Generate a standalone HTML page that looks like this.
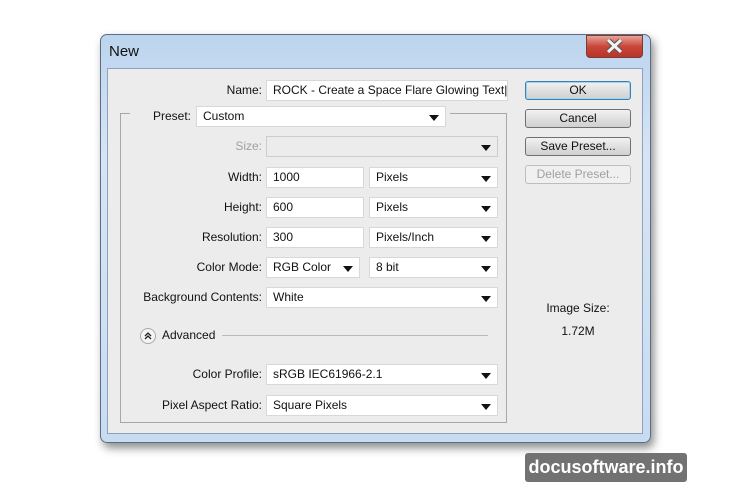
<!DOCTYPE html>
<html><head><style>
body{margin:0;width:740px;height:493px;background:#fff;position:relative;font-family:"Liberation Sans",sans-serif;font-size:12px;color:#111;overflow:hidden}
.a{position:absolute}
.frame{left:100px;top:34px;width:551px;height:409px;border-radius:7px;background:linear-gradient(#bcd4ee,#d6e5f5 30%,#c8dcf1);border:1px solid #5a6d84;box-shadow:3px 5px 9px rgba(0,0,0,.45);box-sizing:border-box}
.content{left:107px;top:68px;width:536px;height:366px;background:#ececec;border:1px solid #8ea3bb;box-sizing:border-box}
.inp{background:#fff;border:1px solid #d8d8d8;box-sizing:border-box;height:21px;line-height:19px;padding-left:6px;white-space:nowrap;overflow:hidden}
.sel::after{content:"";position:absolute;right:6px;top:8px;border-left:5px solid transparent;border-right:5px solid transparent;border-top:6px solid #111}
.lbl{text-align:right;width:150px;line-height:21px}
.btn{left:525px;width:106px;height:19px;border:1px solid #707070;border-radius:3px;background:linear-gradient(#f2f2f2,#e0e0e0 50%,#d0d0d0);box-sizing:border-box;text-align:center;line-height:17px}
</style></head><body>
<div class="a frame"></div>
<div class="a" style="left:109px;top:43px;font-size:15px;color:#111">New</div>
<div class="a" style="left:586px;top:35px;width:57px;height:23px;border-radius:0 0 4px 4px;background:linear-gradient(#e8a297,#c9463a 50%,#b8352a);border:1px solid #7a3a35;box-sizing:border-box"></div>
<svg class="a" style="left:606px;top:39px" width="17" height="14"><path d="M2 1 L15 13 M15 1 L2 13" stroke="#555" stroke-width="5"/><path d="M2 1 L15 13 M15 1 L2 13" stroke="#f2f2f2" stroke-width="3"/></svg>
<div class="a content"></div>
<div class="a" style="left:120px;top:113px;width:387px;height:310px;border:1px solid #a8a8a8;box-sizing:border-box"></div>
<div class="a" style="left:130px;top:108px;width:320px;height:14px;background:#ececec"></div>

<div class="a lbl" style="left:112px;top:80px">Name:</div>
<div class="a inp" style="left:266px;top:80px;width:242px">ROCK - Create a Space Flare Glowing Text|</div>
<div class="a lbl" style="left:41px;top:106px">Preset:</div>
<div class="a inp sel" style="left:196px;top:106px;width:250px">Custom</div>
<div class="a lbl" style="left:112px;top:136px;color:#a0a0a0">Size:</div>
<div class="a inp sel" style="left:266px;top:136px;width:232px;background:#ececec;border-color:#ccc"></div>

<div class="a lbl" style="left:112px;top:167px">Width:</div>
<div class="a inp" style="left:266px;top:167px;width:98px">1000</div>
<div class="a inp sel" style="left:369px;top:167px;width:129px">Pixels</div>
<div class="a lbl" style="left:112px;top:197px">Height:</div>
<div class="a inp" style="left:266px;top:197px;width:98px">600</div>
<div class="a inp sel" style="left:369px;top:197px;width:129px">Pixels</div>
<div class="a lbl" style="left:112px;top:227px">Resolution:</div>
<div class="a inp" style="left:266px;top:227px;width:98px">300</div>
<div class="a inp sel" style="left:369px;top:227px;width:129px">Pixels/Inch</div>
<div class="a lbl" style="left:112px;top:257px">Color Mode:</div>
<div class="a inp sel" style="left:266px;top:257px;width:94px">RGB Color</div>
<div class="a inp sel" style="left:369px;top:257px;width:129px">8 bit</div>
<div class="a lbl" style="left:110px;top:287px;width:152px">Background Contents:</div>
<div class="a inp sel" style="left:266px;top:287px;width:232px">White</div>

<div class="a" style="left:140px;top:328px;width:16px;height:16px;border-radius:50%;border:1px solid #aaa;background:#f4f4f4;box-sizing:border-box"></div>
<svg class="a" style="left:143px;top:331px" width="10" height="10"><path d="M2 5 L5 2 L8 5 M2 8 L5 5 L8 8" stroke="#222" stroke-width="1.3" fill="none"/></svg>
<div class="a" style="left:162px;top:328px">Advanced</div>
<div class="a" style="left:222px;top:335px;width:266px;height:1px;background:#bbb"></div>

<div class="a lbl" style="left:112px;top:364px">Color Profile:</div>
<div class="a inp sel" style="left:266px;top:364px;width:232px">sRGB IEC61966-2.1</div>
<div class="a lbl" style="left:112px;top:395px">Pixel Aspect Ratio:</div>
<div class="a inp sel" style="left:266px;top:395px;width:232px">Square Pixels</div>

<div class="a btn" style="top:81px;border-color:#3c7fb1;box-shadow:inset 0 0 0 1px #9fd3f3">OK</div>
<div class="a btn" style="top:109px">Cancel</div>
<div class="a btn" style="top:137px">Save Preset...</div>
<div class="a btn" style="top:165px;color:#a0a0a0;border-color:#bdbdbd;background:#f0f0f0">Delete Preset...</div>
<div class="a" style="left:525px;top:301px;width:106px;text-align:center">Image Size:</div>
<div class="a" style="left:525px;top:324px;width:106px;text-align:center">1.72M</div>

<div class="a" style="left:525px;top:453px;width:162px;height:29px;background:#727272;border-radius:3px;color:#fff;font-weight:bold;font-size:18px;line-height:29px;text-align:center">docusoftware.info</div>
</body></html>
